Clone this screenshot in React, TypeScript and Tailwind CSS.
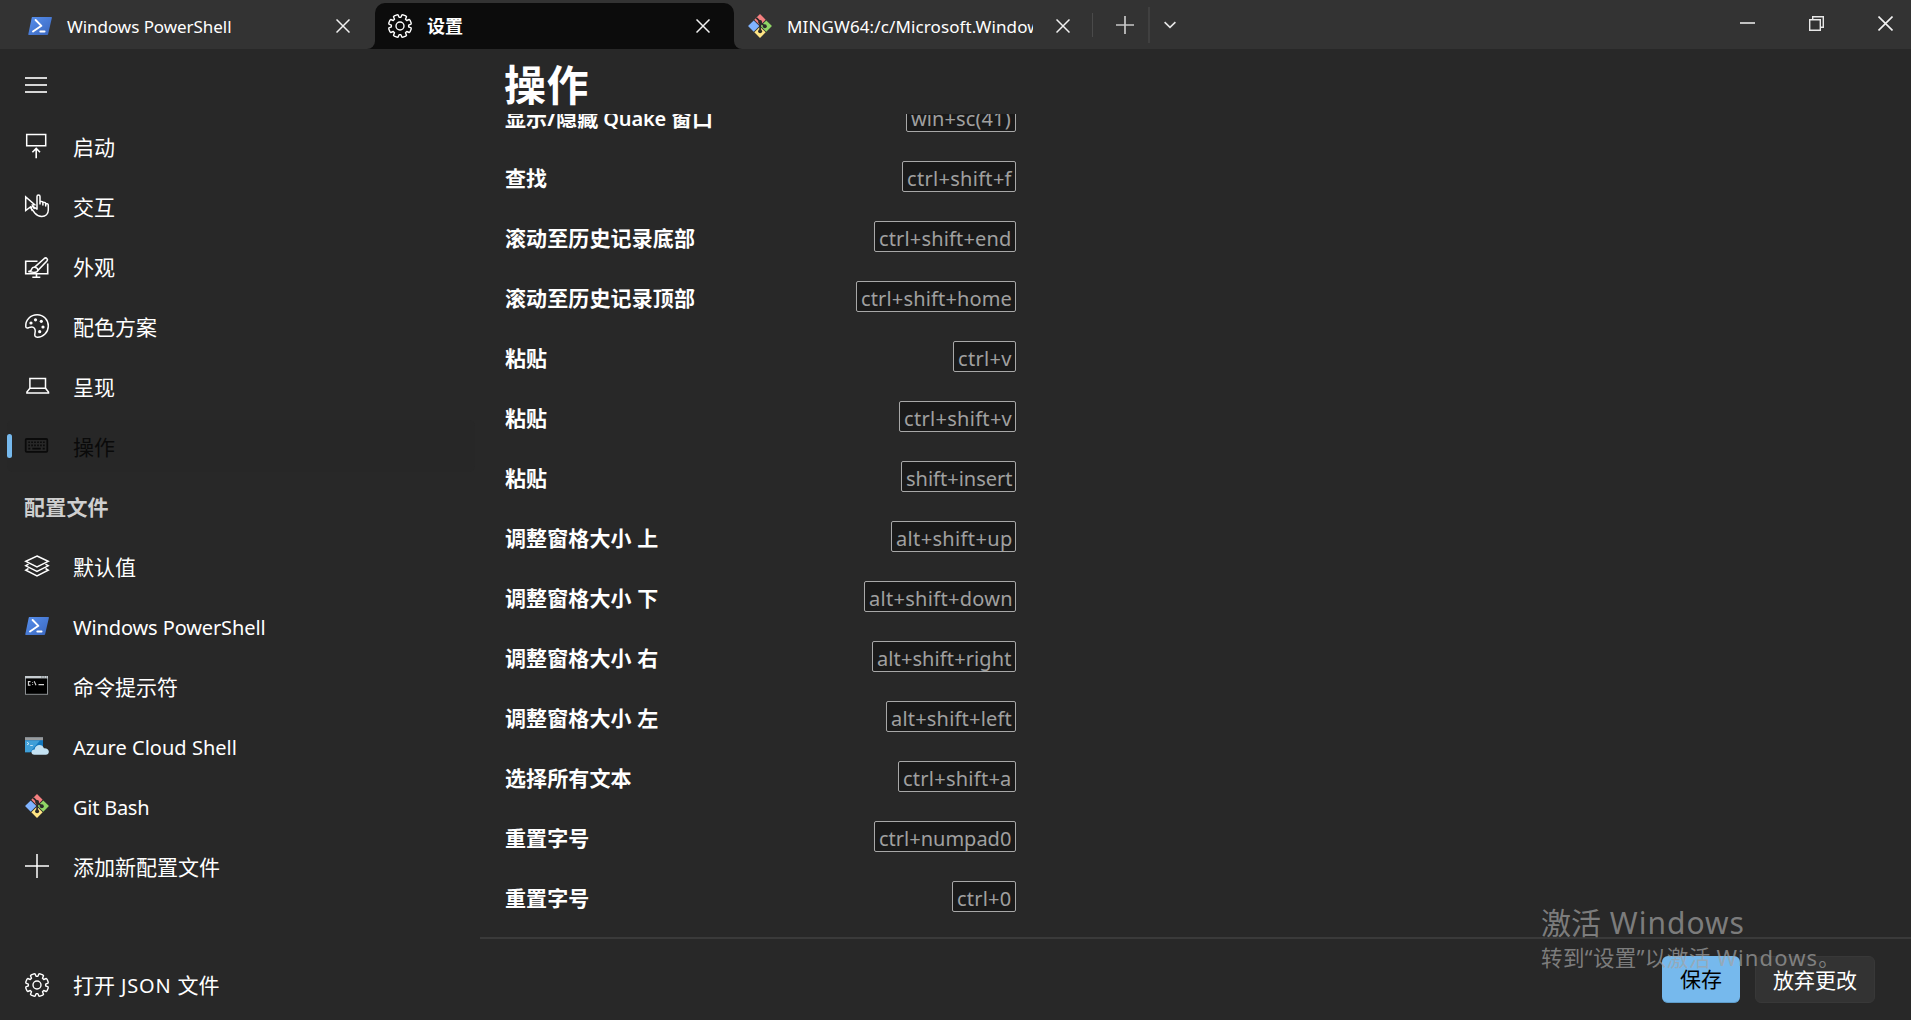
import type { ReactNode } from "react";

const Svg = ({ children, className = "" }: { children: ReactNode; className?: string }) => (
  <svg width="24" height="24" viewBox="0 0 24 24" fill="none" stroke="currentColor" strokeWidth="1.4" className={`shrink-0 overflow-visible ${className}`}>
    {children}
  </svg>
);

const GearIcon = () => (
  <Svg>
    <circle cx="12" cy="12" r="4" />
    <path d={gearPath} strokeLinejoin="round" />
  </Svg>
);

const gearPath = (() => {
  const pts: string[] = [];
  for (let i = 0; i < 8; i++) {
    const c = (i * Math.PI) / 4 + Math.PI / 8;
    const spots: [number, number][] = [
      [-0.29, 8.7],
      [-0.22, 11.3],
      [-0.13, 11.6],
      [0.13, 11.6],
      [0.22, 11.3],
      [0.29, 8.7],
    ];
    spots.forEach(([a, r]) => {
      pts.push(`${(12 + r * Math.cos(c + a)).toFixed(2)} ${(12 + r * Math.sin(c + a)).toFixed(2)}`);
    });
  }
  return `M${pts.join("L")}Z`;
})();

const StartupIcon = () => (
  <Svg>
    <path d="M1.7.5h19v11.2h-19z" strokeWidth="1.5" />
    <path d="M11.2 24.3V14.5M7.4 18.3l3.8-3.8 3.8 3.8" strokeWidth="1.6" />
  </Svg>
);

const InteractionIcon = () => (
  <Svg>
    <path d="M7.400 17l-1.900-4L.7 16.500V2.900l9 7.800-2.400.3 2.200 4.200" strokeWidth="1.5" />
    <path
      d="M12 11.500V2.500a1.500 1.500 0 0 1 3 0v6M15 10.600V7.500c2.300-.4 2.900.4 2.900 1.300v2.300V8.300c2.200-.3 2.800.6 2.800 1.400v2.400-2.600c2-.2 2.600.9 2.600 1.900v4.700c0 3.900-2.800 6.300-6.500 6.300-3.400 0-5.400-1.500-6.800-3.200l-3.600-4.600c-.6-1.600 1.100-2.600 2.300-1.700l3.300 2.200V10"
      strokeWidth="1.5"
      strokeLinejoin="round"
    />
  </Svg>
);

const AppearanceIcon = () => (
  <Svg>
    <path d="M12.500 7.200H.7v12.600h22V9.500" strokeWidth="1.6" />
    <path d="M11.500 20v3M7.300 23.200h8" strokeWidth="1.6" />
    <path d="M9.700 13.200l9.600-8.700c1.900-1.500 4.200.6 2.600 2.500l-8.800 9.300" strokeWidth="1.6" />
    <path d="M9.700 13.200c2 .3 3.200 1.600 3.400 3.100-.7 2-4.200 2.600-9.800 1.300 3-.4 3.200-1.400 3.500-2.800.4-1.200 1.600-1.800 2.900-1.600z" strokeWidth="1.500" />
  </Svg>
);

const PaletteIcon = () => (
  <Svg>
    <path d="M.8 12.6C.2 6.2 5.500.8 12.200.8 18.500.8 23.300 5.800 23.300 12c0 6.300-5.200 11.500-11 11.300-2.300-.2-2.900-1.800-2.400-3.800.6-2.300.6-4.600-1.300-6-1.700-1.300-3.600-.4-5.100.2-1.300.5-2.500.3-2.700-1.100z" strokeWidth="1.5" />
    <g fill="currentColor" stroke="none">
      <circle cx="6" cy="9" r="1.6" />
      <circle cx="10.500" cy="5.800" r="1.6" />
      <circle cx="16.300" cy="7.300" r="1.6" />
      <circle cx="18" cy="13" r="1.6" />
      <circle cx="14.700" cy="17.700" r="1.6" />
    </g>
  </Svg>
);

const LaptopIcon = () => (
  <Svg>
    <path d="M4.900 14.300V4.500h15.600v9.800z" strokeWidth="1.5" />
    <path d="M4.900 14.300L1.900 18v.9h21.600V18l-3-3.700" strokeWidth="1.5" />
  </Svg>
);

const KeyboardIcon = () => (
  <Svg>
    <rect x=".7" y="5" width="21.600" height="12.800" rx="1" strokeWidth="1.8" />
    <path d="M3.300 8.300h16.400M3.300 11.400h16.400" strokeDasharray="1.6 1.360" strokeWidth="1.6" />
    <path d="M3.300 14.600h2M7.300 14.600h8.500M17.700 14.600h2" strokeWidth="1.6" />
  </Svg>
);

const LayersIcon = () => (
  <Svg>
    <path d="M12 2L23.200 7.300 12 12.800.8 7.300z" strokeWidth="1.5" />
    <path d="M3.500 10.200L.8 11.800 12 17.300l11.200-5.500-2.700-1.600M3.500 14.500L.8 16.100 12 21.800l11.200-5.700-2.700-1.600" strokeWidth="1.5" />
  </Svg>
);

const PowerShellIcon = ({ id }: { id: string }) => (
  <Svg>
    <defs>
      <linearGradient id={id} x1="0" y1="0" x2="1" y2="1">
        <stop offset="0" stopColor="#5790ee" />
        <stop offset="1" stopColor="#3a66bd" />
      </linearGradient>
    </defs>
    <path d="M4.300 3h19c.5 0 .7.3.6.700L20.100 20.300c-.1.500-.5.700-.9.700H.9c-.5 0-.7-.3-.6-.7L3.700 3.700c.1-.5.300-.7.6-.7z" fill={`url(#${id})`} stroke="none" />
    <path d="M7.600 6l5.800 5.800L5 17.500M12.300 17.500h4.300" stroke="#fff" strokeWidth="1.9" strokeLinecap="round" strokeLinejoin="round" />
  </Svg>
);

const CmdIcon = () => (
  <Svg>
    <rect x=".5" y="2.500" width="22" height="17.800" fill="#000" stroke="#8b8f92" strokeWidth="1" />
    <path d="M0 3.200h23" stroke="#c6ccd0" strokeWidth="2.400" />
    <path d="M16 3h1.500M18.500 3H20M21 3h1" stroke="#6f7579" strokeWidth="1.2" />
    <path d="M5.500 7.600H3.400v3.500h2.100M7.600 8.300v.8M7.600 10.300v.8M9.200 7.300l1.800 4M13.500 10.600h5.500" stroke="#d5d5d5" strokeWidth="1.1" />
  </Svg>
);

const AzureIcon = () => (
  <Svg>
    <path d="M0 3.700h18v14.500H0z" fill="#1277bd" stroke="none" />
    <path d="M0 6.500h15L5 18.200H0z" fill="#3f9fd8" stroke="none" />
    <path d="M0 3.200h18v3H0z" fill="#999b9d" stroke="none" />
    <path d="M2 8.300l2 1.300-2 1.300M5.200 11.500h2.600" stroke="#e5f3fb" strokeWidth=".8" />
    <path d="M9.500 20.800c-4.100-.2-4-5.300.2-5.300.2-5.500 8-6.200 9.200-1.200 6-.4 6.600 6.200 1.700 6.500z" fill="#c4e2f3" stroke="none" />
  </Svg>
);

const GitIcon = () => (
  <Svg>
    <g stroke="none" transform="rotate(45 12 12)">
      <rect x="3.600" y="3.600" width="8" height="8" fill="#f58080" />
      <rect x="12.500" y="3.600" width="8" height="8" fill="#90d566" />
      <rect x="3.600" y="12.500" width="8" height="8" fill="#80b3ff" />
      <rect x="12.500" y="12.500" width="8" height="8" fill="#ffe584" />
    </g>
    <path d="M8.300 3.800l3.800 3.800v9.900M12.100 8l4.600 4.300" stroke="#2a2a2a" strokeWidth="1.7" />
    <g fill="#2a2a2a" stroke="none">
      <circle cx="12.100" cy="8" r="2" />
      <circle cx="16.800" cy="12.200" r="2" />
      <circle cx="12.100" cy="17.300" r="2" />
    </g>
  </Svg>
);

const PlusIcon = () => (
  <Svg>
    <path d="M0 12h24M12 0v24" strokeWidth="1.5" />
  </Svg>
);

const CloseIcon = () => (
  <svg width="14" height="14" viewBox="0 0 14 14" stroke="#f0f0f0" strokeWidth="1.5" className="shrink-0">
    <path d="M.5.5l13 13M13.500.5l-13 13" />
  </svg>
);

const NavItem = ({ icon, children, active = false }: { icon: ReactNode; children: ReactNode; active?: boolean }) => (
  <div className={`relative flex h-[60px] items-center pl-[25px] ${active ? "text-[#0a0a0a]" : "text-white"}`}>
    {active && <div className="absolute inset-y-1 left-[7px] right-[5px] rounded-md bg-[#272727]" />}
    {active && <div className="absolute left-[7px] top-[18px] h-6 w-[5px] rounded-full bg-[#76b9ed]" />}
    <span className="relative">{icon}</span>
    <span className="relative mt-px ml-6 flex items-baseline whitespace-pre text-[21px] leading-[30px]">{children}</span>
  </div>
);

const Latin = ({ children, className }: { children: ReactNode; className: string }) => <span className={`text-[20px] ${className}`}>{children}</span>;

const bindings: [string, string, string][] = [
  ["查找", "ctrl+shift+f", "w-[114px] tracking-[0.3px]"],
  ["滚动至历史记录底部", "ctrl+shift+end", "w-[142px] tracking-[0.15px]"],
  ["滚动至历史记录顶部", "ctrl+shift+home", "w-[160px] tracking-[0.15px]"],
  ["粘贴", "ctrl+v", "w-[63px] tracking-[0.3px]"],
  ["粘贴", "ctrl+shift+v", "w-[117px] tracking-[0.3px]"],
  ["粘贴", "shift+insert", "w-[115px] tracking-[0px]"],
  ["调整窗格大小 上", "alt+shift+up", "w-[125px] tracking-[0.35px]"],
  ["调整窗格大小 下", "alt+shift+down", "w-[152px] tracking-[0.3px]"],
  ["调整窗格大小 右", "alt+shift+right", "w-[144px] tracking-[0.1px]"],
  ["调整窗格大小 左", "alt+shift+left", "w-[130px] tracking-[0.2px]"],
  ["选择所有文本", "ctrl+shift+a", "w-[118px] tracking-[0.25px]"],
  ["重置字号", "ctrl+numpad0", "w-[142px] tracking-[0px]"],
  ["重置字号", "ctrl+0", "w-[64px] tracking-[0.2px]"],
];

const Binding = ({ label, keys, size }: { label: ReactNode; keys: string; size: string }) => (
  <div className="flex h-[60px] w-[511px] shrink-0 items-start justify-between pt-[14px]">
    <span className="mt-[2px] whitespace-pre text-[21px] leading-[30px] font-bold tracking-[0.12px] text-white">{label}</span>
    <span className={`h-[31px] rounded-[2px] border border-[#a8a8a8] bg-[#1a1a1a] pl-[4px] text-[20px] leading-[33px] whitespace-nowrap text-[#a0a0a0] ${size}`}>
      {keys}
    </span>
  </div>
);

export default function App() {
  return (
    <div className="relative flex h-[1020px] w-[1911px] flex-col overflow-hidden bg-[#282828] font-['Noto_Sans','Noto_Sans_CJK_SC',sans-serif] text-white">
      <header className="flex h-[49px] shrink-0 bg-[#333333] text-[17px] leading-[24px]">
        <div className="flex w-[375px] items-center bg-[#0c0c0c]">
          <div className="flex h-[49px] w-full items-center rounded-br-lg bg-[#333333] pt-[3px] pr-[25px] pl-7">
            <PowerShellIcon id="ps-tab" />
            <span className="mt-px ml-[15px] flex-1 tracking-[-0.05px]">Windows PowerShell</span>
            <CloseIcon />
          </div>
        </div>
        <div className="mt-[3px] flex h-[46px] w-[359px] items-center rounded-t-[10px] bg-[#0c0c0c] pr-[24px] pb-px pl-[13px]">
          <GearIcon />
          <span className="ml-[15px] flex-1 text-[18px] font-bold">设置</span>
          <CloseIcon />
        </div>
        <div className="flex w-[358px] items-end bg-[linear-gradient(to_top_right,#0c0c0c_8px,#333333_8px)]">
          <div className="flex h-[49px] w-full items-center rounded-bl-lg bg-[#333333] pt-[3px] pl-[14px]">
            <GitIcon />
            <span className="mt-px mr-[23px] ml-[15px] w-[246px] overflow-hidden whitespace-nowrap tracking-[0.12px]">MINGW64:/c/Microsoft.Windows</span>
            <CloseIcon />
          </div>
        </div>
        <div className="mt-[13px] h-6 w-px bg-[#4a4a4a]" />
        <div className="flex w-[55px] items-center pl-[23px]">
          <svg width="18" height="18" viewBox="0 0 18 18" stroke="#c8c8c8" strokeWidth="1.700">
            <path d="M0 9h18M9 0v18" />
          </svg>
        </div>
        <div className="mt-[7px] h-9 w-[2px] bg-[#404040]" />
        <div className="flex flex-1 items-center pl-[14px]">
          <svg width="12" height="8" viewBox="0 0 12 8" fill="none" stroke="#e6e6e6" strokeWidth="1.6">
            <path d="M.6 1.200l5.400 5.200 5.400-5.200" />
          </svg>
        </div>
        <div className="mt-4 mr-[18px] flex h-[15px] gap-[54px]">
          <svg width="15" height="15" viewBox="0 0 15 15" stroke="#e8e8e8" strokeWidth="1.6">
            <path d="M0 7h15" />
          </svg>
          <svg width="15" height="15" viewBox="0 0 15 15" fill="none" stroke="#e8e8e8" strokeWidth="1.4" className="overflow-visible">
            <path d="M.7 3.700h10.600v10.600H.7zM3.700 3.700V.7h10.600v10.600h-3" />
          </svg>
          <svg width="15" height="15" viewBox="0 0 15 15" stroke="#f2f2f2" strokeWidth="1.6">
            <path d="M.5.5l14 14M14.500.5l-14 14" />
          </svg>
        </div>
      </header>

      <div className="flex min-h-0 flex-1">
        <nav className="flex w-[480px] shrink-0 flex-col pb-[5px]">
          <div className="flex h-[67px] flex-col justify-start gap-[5px] pt-[28px] pl-[25px]">
            <div className="h-[2px] w-[22px] bg-[#d6d6d6]" />
            <div className="h-[2px] w-[22px] bg-[#d6d6d6]" />
            <div className="h-[2px] w-[22px] bg-[#d6d6d6]" />
          </div>
          <NavItem icon={<StartupIcon />}>启动</NavItem>
          <NavItem icon={<InteractionIcon />}>交互</NavItem>
          <NavItem icon={<AppearanceIcon />}>外观</NavItem>
          <NavItem icon={<PaletteIcon />}>配色方案</NavItem>
          <NavItem icon={<LaptopIcon />}>呈现</NavItem>
          <NavItem icon={<KeyboardIcon />} active>操作</NavItem>
          <div className="flex h-[60px] items-center pt-[2px] pl-[24px] text-[21px] leading-[30px] font-bold tracking-[0.2px] text-[#cfcfcf]">配置文件</div>
          <NavItem icon={<LayersIcon />}>默认值</NavItem>
          <NavItem icon={<PowerShellIcon id="ps-nav" />}>
            <Latin className="mt-[2px] tracking-[-0.12px]">Windows PowerShell</Latin>
          </NavItem>
          <NavItem icon={<CmdIcon />}>命令提示符</NavItem>
          <NavItem icon={<AzureIcon />}>
            <Latin className="mt-[2px] tracking-[0.02px]">Azure Cloud Shell</Latin>
          </NavItem>
          <NavItem icon={<GitIcon />}>
            <Latin className="mt-[2px] tracking-[-0.25px]">Git Bash</Latin>
          </NavItem>
          <NavItem icon={<PlusIcon />}>添加新配置文件</NavItem>
          <div className="mt-auto">
            <NavItem icon={<GearIcon />}>
              打开<Latin className="tracking-[0.8px]"> JSON </Latin>文件
            </NavItem>
          </div>
        </nav>

        <main className="flex min-w-0 flex-1 flex-col">
          <h1 className="h-[65px] shrink-0 pt-[6px] pl-[24px] text-[42px] leading-[60px] font-bold tracking-[0.6px]">操作</h1>
          <div className="flex h-[825px] shrink-0 flex-col justify-end overflow-hidden border-b-2 border-[#3a3a3a] pb-[10px] pl-[25px]">
            <Binding
              label={
                <>
                  显示/隐藏<span className="text-[20px] font-semibold tracking-[-0.2px]"> Quake </span>窗口
                </>
              }
              keys="win+sc(41)"
              size="w-[110px] tracking-[0.1px]"
            />
            {bindings.map(([label, keys, size], i) => (
              <Binding key={i} label={label} keys={keys} size={size} />
            ))}
          </div>
          <div className="flex justify-end gap-[15px] pt-[17px] pr-9 text-[21px] leading-[47px]">
            <button className="h-[47px] w-[78px] rounded-md border-b border-[#5f9cc9] bg-[#76b9ed] text-black">保存</button>
            <button className="h-[47px] w-[120px] rounded-md border border-[#383838] bg-[#333333] leading-[46px] text-white">放弃更改</button>
          </div>
        </main>
      </div>

      <div className="pointer-events-none absolute top-[900px] left-[1541px] whitespace-pre text-[#a3a3a3]/70">
        <div className="text-[30px] leading-[46px]">
          激活 <span className="ml-px tracking-[1px]">Windows</span>
        </div>
        <div className="-mt-[2px] text-[21.5px] leading-[26px] tracking-[0.4px]">
          转到“设置”以激活 <span className="text-[22px] tracking-[1.1px]">Windows</span>。
        </div>
      </div>
    </div>
  );
}
